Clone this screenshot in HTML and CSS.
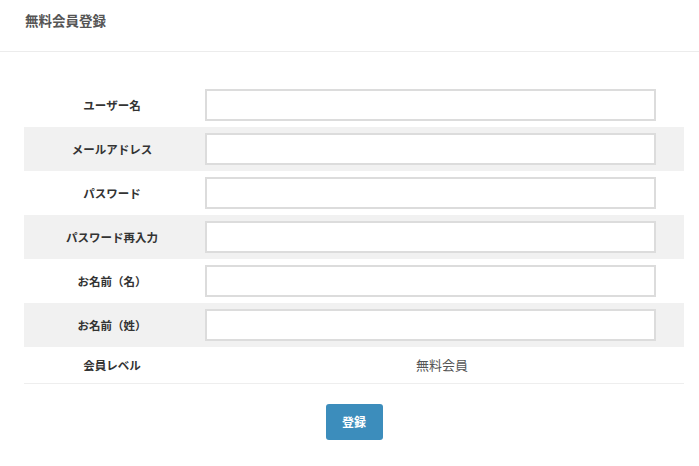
FILE: index.html
```html
<!DOCTYPE html>
<html lang="ja">
<head>
<meta charset="utf-8">
<title>無料会員登録</title>
<link rel="stylesheet" href="styles.css">
</head>
<body>
<header class="page-header">
  <h1 class="page-title">無料会員登録</h1>
</header>
<main class="content">
  <form class="reg-form">
    <table class="reg-table">
      <tr class="row">
        <th class="label">ユーザー名</th>
        <td class="field"><input class="text-input" type="text"></td>
      </tr>
      <tr class="row alt">
        <th class="label">メールアドレス</th>
        <td class="field"><input class="text-input" type="text"></td>
      </tr>
      <tr class="row">
        <th class="label">パスワード</th>
        <td class="field"><input class="text-input" type="password"></td>
      </tr>
      <tr class="row alt">
        <th class="label">パスワード再入力</th>
        <td class="field"><input class="text-input" type="password"></td>
      </tr>
      <tr class="row">
        <th class="label">お名前（名）</th>
        <td class="field"><input class="text-input" type="text"></td>
      </tr>
      <tr class="row alt">
        <th class="label">お名前（姓）</th>
        <td class="field"><input class="text-input" type="text"></td>
      </tr>
      <tr class="row level">
        <th class="label">会員レベル</th>
        <td class="value">無料会員</td>
      </tr>
    </table>
    <div class="actions">
      <button class="submit-btn" type="button">登録</button>
    </div>
  </form>
</main>
</body>
</html>
```

FILE: styles.css
```css
* { box-sizing: border-box; }
html, body {
  margin: 0;
  padding: 0;
  background: #fff;
  font-family: "Noto Sans CJK JP", "Noto Sans", sans-serif;
  color: #333;
}
.page-header {
  height: 52px;
  border-bottom: 1px solid #ececec;
  padding: 10px 25px 0;
}
.page-title {
  margin: 0;
  font-size: 13.5px;
  font-weight: bold;
  color: #555;
  line-height: 20px;
}
.content {
  padding: 31px 15px 0 24px;
}
.reg-table {
  width: 660px;
  border-collapse: collapse;
}
.row { height: 44px; }
.row.alt { background: #f1f1f1; }
.label {
  width: 176px;
  font-size: 11.5px;
  font-weight: bold;
  color: #333;
  text-align: center;
  padding: 0;
}
.field {
  padding: 6px 28px 6px 5px;
}
.text-input {
  display: block;
  width: 451px;
  height: 32px;
  border: 2px solid #dcdcdc;
  background: #fff;
  margin: 0;
  padding: 0 6px;
  font: inherit;
}
.row.level {
  height: 36px;
  border-bottom: 1px solid #eeeeee;
}
.value {
  text-align: center;
  font-size: 13px;
  color: #555;
  padding: 0;
}
.actions {
  display: flex;
  justify-content: center;
  padding-top: 20px;
}
.submit-btn {
  width: 57px;
  height: 36px;
  border: 0;
  border-radius: 3px;
  background: #3c8dbc;
  color: #fff;
  font: inherit;
  font-size: 12px;
  font-weight: bold;
  padding: 0;
}
```
